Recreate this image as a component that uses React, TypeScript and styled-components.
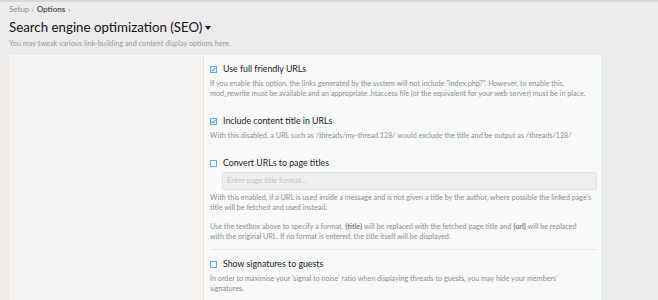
import React from "react";
import styled, { createGlobalStyle } from "styled-components";

const Global = createGlobalStyle`
  html, body { margin: 0; padding: 0; }
  body {
    background: #ebebeb;
    font-family: Lato, "Open Sans", sans-serif;
    color: #141414;
    overflow: hidden;
  }
`;

const Page = styled.div`
  border-top: 2px solid #d9d9d9;
  height: 298px;
  display: flex;
  flex-direction: column;
`;

const Header = styled.header`
  padding: 2px 9px 0 9px;
`;

const Crumbs = styled.div`
  font-size: 8px;
  line-height: 10px;
  color: #8f8f8f;
  display: flex;
  gap: 3px;
  b { color: #5a5a5a; font-weight: 700; }
`;

const Title = styled.h1`
  margin: 4px 0 0 0;
  font-size: 13.3px;
  line-height: 18px;
  font-weight: 400;
  color: #141414;
  display: flex;
  align-items: center;
  gap: 3px;
`;

const Caret = styled.span`
  width: 0;
  height: 0;
  border-left: 3.5px solid transparent;
  border-right: 3.5px solid transparent;
  border-top: 4.5px solid #141414;
  margin-top: 2px;
`;

const Sub = styled.p`
  margin: 3px 0 0 0;
  font-size: 7.3px;
  line-height: 10px;
  color: #9a9a9a;
`;

const Panel = styled.div`
  margin: 6px 57px 0 9px;
  flex: 1;
  display: grid;
  grid-template-columns: 195px 1fr;
`;

const Side = styled.div`
  background: #f5f4f2;
  border-right: 1px solid #e3e3e3;
`;

const Body = styled.div`
  background: #f8f9f9;
  padding: 7px 4px 0 6px;
`;

const Row = styled.div<{ $sep?: boolean }>`
  padding-bottom: ${(p) => (p.$sep ? "7px" : "15px")};
  border-bottom: ${(p) => (p.$sep ? "1px solid #e6e6e6" : "none")};
  margin-bottom: ${(p) => (p.$sep ? "7px" : "0")};
`;

const Label = styled.label`
  display: flex;
  align-items: center;
  gap: 5px;
  font-size: 8.8px;
  line-height: 14px;
  color: #1a1a1a;
`;

const Box = styled.span<{ $on?: boolean }>`
  width: 5px;
  height: 5px;
  border: 1px solid #5aaee6;
  background: ${(p) => (p.$on ? "#e4f1fb" : "#ffffff")};
  display: inline-flex;
  align-items: center;
  justify-content: center;
  flex: none;
  margin-right: 1px;
`;

const Desc = styled.p`
  margin: 3px 0 0 0;
  font-size: 7.2px;
  line-height: 10px;
  color: #8d8d8d;
  white-space: nowrap;
  & + & { margin-top: 9px; }
  b { font-weight: 700; color: #7d7d7d; }
`;

const Input = styled.div`
  margin: 2px 0 3px 12px;
  height: 16px;
  background: #efefef;
  border: 1px solid #e2e2e2;
  border-radius: 2px;
  font-size: 7.5px;
  line-height: 16px;
  color: #c2c2c2;
  padding-left: 4px;
`;

const Check = () => (
  <svg width="5" height="5" viewBox="0 0 5 5">
    <path d="M0.7 2.6 L2 3.9 L4.3 1" fill="none" stroke="#2f86c8" strokeWidth="1" />
  </svg>
);

export default function App() {
  return (
    <Page>
      <Global />
      <Header>
        <Crumbs>
          <span>Setup ›</span>
          <b>Options</b>
          <span>›</span>
        </Crumbs>
        <Title>
          Search engine optimization (SEO) <Caret />
        </Title>
        <Sub>You may tweak various link-building and content display options here.</Sub>
      </Header>
      <Panel>
        <Side />
        <Body>
          <Row>
            <Label>
              <Box $on>
                <Check />
              </Box>
              Use full friendly URLs
            </Label>
            <Desc>
              If you enable this option, the links generated by the system will not include "index.php?". However, to
              enable this,
              <br />
              mod_rewrite must be available and an appropriate .htaccess file (or the equivalent for your web server)
              must be in place.
            </Desc>
          </Row>
          <Row>
            <Label>
              <Box $on>
                <Check />
              </Box>
              Include content title in URLs
            </Label>
            <Desc>
              With this disabled, a URL such as /threads/my-thread.128/ would exclude the title and be output as
              /threads/128/
            </Desc>
          </Row>
          <Row $sep>
            <Label>
              <Box />
              Convert URLs to page titles
            </Label>
            <Input>Enter page title format...</Input>
            <Desc>
              With this enabled, if a URL is used inside a message and is not given a title by the author, where
              possible the linked page's
              <br />
              title will be fetched and used instead.
            </Desc>
            <Desc>
              Use the textbox above to specify a format. <b>{"{title}"}</b> will be replaced with the fetched page title
              and <b>{"{url}"}</b> will be replaced
              <br />
              with the original URL. If no format is entered, the title itself will be displayed.
            </Desc>
          </Row>
          <Row>
            <Label>
              <Box />
              Show signatures to guests
            </Label>
            <Desc>
              In order to maximise your 'signal to noise' ratio when displaying threads to guests, you may hide your
              members'
              <br />
              signatures.
            </Desc>
          </Row>
        </Body>
      </Panel>
    </Page>
  );
}
